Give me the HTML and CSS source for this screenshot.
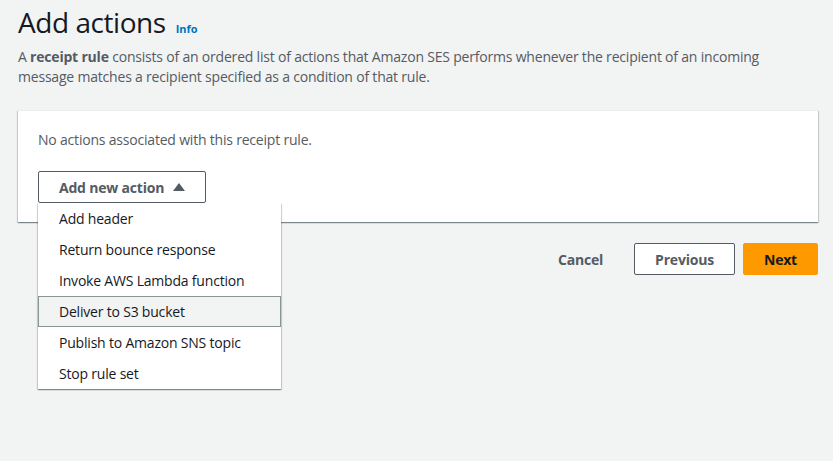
FILE: index.html
```html
<!DOCTYPE html>
<html lang="en">
<head>
<meta charset="utf-8">
<title>Add actions</title>
<link rel="stylesheet" href="styles.css">
</head>
<body>
<main class="page">
  <header class="head">
    <h1 class="title">Add actions</h1>
    <a class="info" href="#">Info</a>
  </header>
  <p class="desc">A <b>receipt rule</b> consists of an ordered list of actions that Amazon SES performs whenever the recipient of an incoming message matches a recipient specified as a condition of that rule.</p>

  <section class="panel">
    <p class="empty">No actions associated with this receipt rule.</p>
    <div class="dd">
      <button class="dd-btn" type="button"><span>Add new action</span>
        <svg class="caret" width="12" height="8" viewBox="0 0 12 8"><path d="M6 0 L12 8 L0 8 Z" fill="#545b64"/></svg>
      </button>
      <ul class="menu">
        <li class="item">Add header</li>
        <li class="item">Return bounce response</li>
        <li class="item">Invoke AWS Lambda function</li>
        <li class="item item-hl">Deliver to S3 bucket</li>
        <li class="item">Publish to Amazon SNS topic</li>
        <li class="item">Stop rule set</li>
      </ul>
    </div>
  </section>

  <footer class="actions">
    <button class="btn btn-link" type="button">Cancel</button>
    <button class="btn btn-normal" type="button">Previous</button>
    <button class="btn btn-primary" type="button">Next</button>
  </footer>
</main>
</body>
</html>
```

FILE: styles.css
```css
* { box-sizing: border-box; }
html, body {
  margin: 0;
  padding: 0;
  min-height: 100%;
  background: #f2f3f3;
  font-family: "Open Sans", "Noto Sans", Arial, sans-serif;
  letter-spacing: -0.2px;
  color: #16191f;
}
.page {
  width: 800px;
  min-height: 461px;
  margin-left: 18px;
  padding-top: 4px;
}
.head {
  display: flex;
  align-items: baseline;
  gap: 10px;
  height: 36px;
}
.title {
  margin: 0;
  font-size: 28px;
  line-height: 36px;
  font-weight: 400;
  letter-spacing: -0.45px;
  color: #16191f;
}
.info {
  font-size: 11px;
  font-weight: 700;
  letter-spacing: 0;
  color: #0073bb;
  text-decoration: none;
}
.desc {
  margin: 7px 0 0;
  font-size: 14px;
  line-height: 20px;
  color: #545b64;
  width: 790px;
}
.desc b { color: #545b64; }
.panel {
  margin-top: 23px;
  background: #fff;
  border-top: 1px solid #eaeded;
  padding: 19px 20px 19px;
  box-shadow: 0 1px 1px 0 rgba(0,28,36,.3), 1px 1px 1px 0 rgba(0,28,36,.15), -1px 1px 1px 0 rgba(0,28,36,.15);
}
.empty {
  margin: 0;
  font-size: 14px;
  line-height: 20px;
  color: #545b64;
}
.dd {
  position: relative;
  margin-top: 21px;
  width: 168px;
}
.dd-btn {
  display: flex;
  align-items: center;
  gap: 9px;
  white-space: nowrap;
  width: 168px;
  height: 32px;
  padding: 0 19px 0 20px;
  background: #fff;
  border: 1px solid #545b64;
  border-radius: 2px;
  font-family: inherit;
  font-size: 14px;
  font-weight: 700;
  letter-spacing: inherit;
  color: #545b64;
  cursor: pointer;
}
.menu {
  position: absolute;
  top: 32px;
  left: 0;
  width: 243px;
  margin: 0;
  padding: 0;
  list-style: none;
  background: #fff;
  z-index: 2;
  box-shadow: 0 1px 1px 0 rgba(0,28,36,.3), 1px 1px 1px 0 rgba(0,28,36,.15), -1px 1px 1px 0 rgba(0,28,36,.15);
}
.item {
  height: 31px;
  line-height: 29px;
  padding-left: 21px;
  font-size: 14px;
  color: #16191f;
  border-top: 1px solid transparent;
  border-bottom: 1px solid transparent;
}
.item-hl {
  background: #f2f3f3;
  border: 1px solid #879596;
  padding-left: 20px;
}
.actions {
  display: flex;
  justify-content: flex-end;
  align-items: center;
  gap: 8px;
  margin-top: 21px;
}
.btn {
  height: 32px;
  padding: 0 20px;
  font-family: inherit;
  font-size: 14px;
  font-weight: 700;
  letter-spacing: inherit;
  border-radius: 2px;
  cursor: pointer;
}
.btn-link {
  background: transparent;
  border: 1px solid transparent;
  color: #545b64;
  margin-right: 2px;
}
.btn-normal {
  background: #fff;
  border: 1px solid #545b64;
  color: #545b64;
}
.btn-primary {
  background: #ff9900;
  border: 1px solid #ff9900;
  color: #16191f;
}
```
